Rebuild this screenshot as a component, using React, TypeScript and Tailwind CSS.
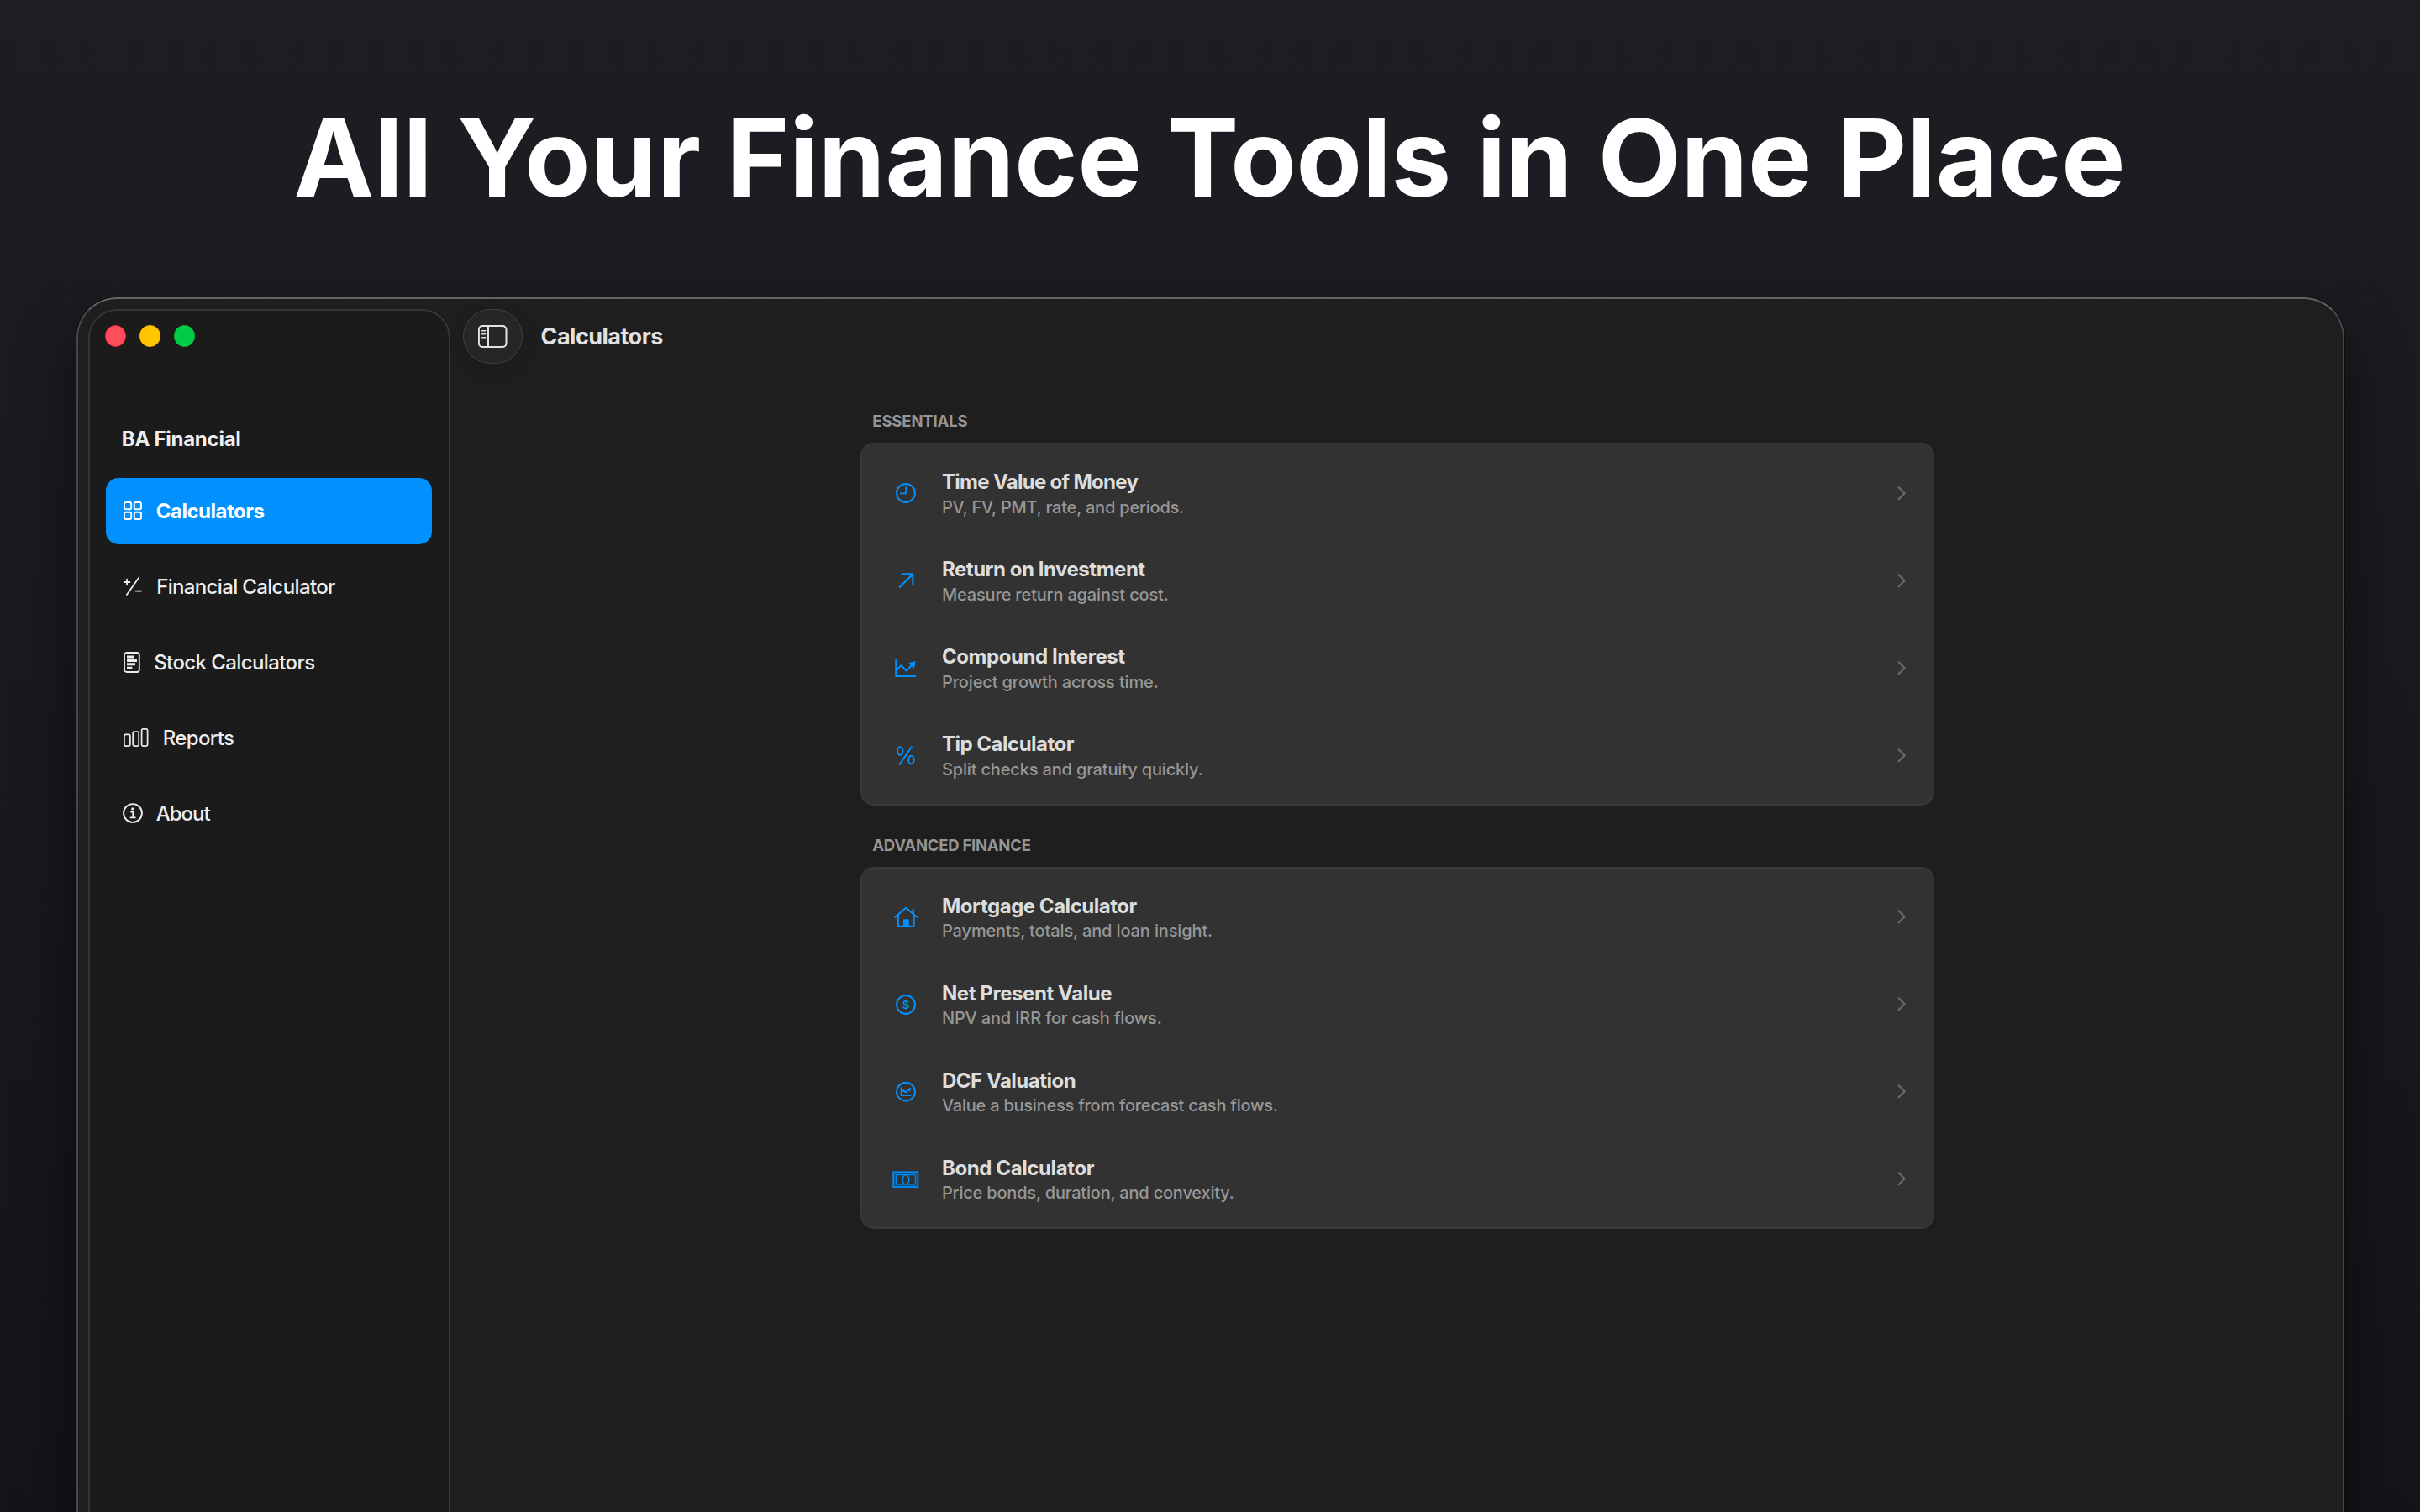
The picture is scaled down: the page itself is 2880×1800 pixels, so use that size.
import React from "react";

type IconProps = { children: React.ReactNode };

/* 44px artboard shared by the list icons */
const ListIcon = ({ children }: IconProps) => (
  <svg
    viewBox="0 0 44 44"
    className="h-11 w-11 shrink-0 text-[#0091ff]"
    fill="none"
    stroke="currentColor"
    strokeWidth="2"
    strokeLinecap="round"
    strokeLinejoin="round"
  >
    {children}
  </svg>
);

const ClockIcon = () => (
  <ListIcon>
    <circle cx="22" cy="22" r="10.9" />
    <path d="M22.2 14.8V22.3H15.8" strokeWidth="1.7" />
  </ListIcon>
);

const ArrowUpRightIcon = () => (
  <ListIcon>
    <path d="M14.6 30L30 14.8M17.6 14.4H30.4V27" strokeWidth="2.1" />
  </ListIcon>
);

const TrendIcon = () => (
  <ListIcon>
    <path d="M10.3 11.9V32H33.4" strokeLinejoin="miter" />
    <path d="M11.3 24.7L16.3 19.2L22.8 25.6L29.2 18.8" />
    <path d="M33 14.9L26.2 16.6L31.5 22Z" fill="currentColor" strokeWidth="1.2" />
  </ListIcon>
);

const PercentIcon = () => (
  <ListIcon>
    <ellipse cx="15.2" cy="17" rx="3.2" ry="4.8" />
    <ellipse cx="28.4" cy="27.6" rx="3.2" ry="4.8" />
    <path d="M14.6 33L28.8 12.2" />
  </ListIcon>
);

const HouseIcon = () => (
  <ListIcon>
    <path d="M9.3 21.8L22.2 10.8L35.2 21.8" />
    <path d="M12.8 19.5V31.6Q12.8 32.7 13.9 32.7H30.6Q31.7 32.7 31.7 31.6V19.5" />
    <rect x="19" y="24.3" width="6.8" height="8.4" fill="currentColor" stroke="none" />
    <path d="M30.8 13.2V17.6" strokeWidth="2.2" />
  </ListIcon>
);

const DollarCircleIcon = () => (
  <ListIcon>
    <circle cx="22" cy="22" r="10.9" />
    <text
      x="22"
      y="26.8"
      textAnchor="middle"
      fill="currentColor"
      stroke="none"
      className="font-['Inter',sans-serif] text-[13.5px] font-medium"
    >
      $
    </text>
  </ListIcon>
);

const TrendCircleIcon = () => (
  <ListIcon>
    <circle cx="22" cy="21.7" r="10.9" />
    <path d="M16.4 17V26.3H27.6" strokeWidth="1.5" />
    <path d="M17 22.4L19.2 19.9L21.9 22.6L24.8 19.6" strokeWidth="1.5" />
    <path d="M27.4 17.6L24 18.5L26.6 21.1Z" fill="currentColor" strokeWidth="0.9" />
  </ListIcon>
);

const BanknoteIcon = () => (
  <ListIcon>
    <rect x="7.2" y="13.3" width="29.2" height="17.8" fill="#0c5388" strokeWidth="1.7" strokeLinejoin="miter" />
    <rect x="10.4" y="16.6" width="22.8" height="11.2" fill="#323232" strokeWidth="1.2" stroke="#0484e8" />
    <ellipse cx="21.9" cy="22.2" rx="3.9" ry="5.5" strokeWidth="1.5" />
  </ListIcon>
);

const GridIcon = () => (
  <svg width="22" height="22" viewBox="0 0 22 22" fill="none" stroke="currentColor" strokeWidth="1.9">
    <rect x="1" y="1" width="8.2" height="8.2" rx="1.8" />
    <rect x="12.8" y="1" width="8.2" height="8.2" rx="1.8" />
    <rect x="1" y="12.8" width="8.2" height="8.2" rx="1.8" />
    <rect x="12.8" y="12.8" width="8.2" height="8.2" rx="1.8" />
  </svg>
);

const PlusMinusIcon = () => (
  <svg width="22" height="22" viewBox="0 0 22 22" fill="none" stroke="currentColor" strokeWidth="1.8" strokeLinecap="round">
    <path d="M3.9 21L18 1" />
    <path d="M0.8 6H7.4M4.1 2.7V9.3" />
    <path d="M14.6 16.6H21.2" />
  </svg>
);

const DocumentIcon = () => (
  <svg width="20" height="25" viewBox="0 0 20 25" fill="none" stroke="currentColor" strokeWidth="1.8">
    <rect x="1" y="1" width="17.8" height="23" rx="2.8" />
    <path d="M4 6H12M4 10.4H16M4 14.8H14M4 19.2H10.4" strokeWidth="3" />
  </svg>
);

const BarsIcon = () => (
  <svg width="30" height="22" viewBox="0 0 30 22" fill="none" stroke="currentColor" strokeWidth="1.7">
    <rect x="0.9" y="7.4" width="7" height="13.7" rx="1.6" />
    <rect x="11.2" y="4" width="7" height="17.1" rx="1.6" />
    <rect x="21.6" y="0.9" width="7" height="20.2" rx="1.6" />
  </svg>
);

const InfoIcon = () => (
  <svg width="24" height="24" viewBox="0 0 24 24" fill="none" stroke="currentColor" strokeWidth="1.9" strokeLinecap="round" className="-ml-px">
    <circle cx="12" cy="12" r="10.9" />
    <circle cx="11.8" cy="6.9" r="1.6" fill="currentColor" stroke="none" />
    <path d="M9.9 10.6H12.2V17.2M9.4 17.3H15" strokeWidth="1.7" />
  </svg>
);

const SidebarToggleIcon = () => (
  <svg width="35" height="28" viewBox="0 0 35 28" fill="none" stroke="currentColor" strokeWidth="2" strokeLinecap="round">
    <rect x="0.9" y="0.9" width="32.6" height="25.2" rx="4.6" />
    <path d="M12 1.2V25.8" />
    <path d="M4.6 6.8H8.6M4.6 10.8H8.6M4.6 14.8H8.6" strokeWidth="1.6" />
  </svg>
);

const Chevron = () => (
  <svg width="10" height="17" viewBox="0 0 10 17" fill="none" stroke="#6a6a6a" strokeWidth="2.2" strokeLinecap="round" strokeLinejoin="round">
    <path d="M1.6 1.2L8.7 8.2L1.6 15.2" />
  </svg>
);

const navItems = [
  { label: "Calculators", icon: <GridIcon />, row: "bg-[#0091ff] text-white font-bold", track: "ml-px tracking-[-0.5px]" },
  { label: "Financial Calculator", icon: <PlusMinusIcon />, row: "text-[#ededed] font-medium", track: "ml-[1.5px] tracking-[-0.66px]" },
  { label: "Stock Calculators", icon: <DocumentIcon />, row: "text-[#ededed] font-medium", track: "ml-[0.5px] tracking-[-0.6px]" },
  { label: "Reports", icon: <BarsIcon />, row: "text-[#ededed] font-medium", track: "ml-px tracking-[-0.65px]" },
  { label: "About", icon: <InfoIcon />, row: "text-[#ededed] font-medium", track: "tracking-[-1px]" },
];

const sections = [
  {
    heading: "ESSENTIALS",
    track: "tracking-[-0.15px]",
    rows: [
      { icon: <ClockIcon />, title: "Time Value of Money", t: "tracking-[-0.7px]", sub: "PV, FV, PMT, rate, and periods.", s: "tracking-[-0.199px]" },
      { icon: <ArrowUpRightIcon />, title: "Return on Investment", t: "tracking-[-0.47px]", sub: "Measure return against cost.", s: "tracking-[-0.175px]" },
      { icon: <TrendIcon />, title: "Compound Interest", t: "tracking-[-0.44px]", sub: "Project growth across time.", s: "tracking-[-0.15px]" },
      { icon: <PercentIcon />, title: "Tip Calculator", t: "tracking-[-0.5px]", sub: "Split checks and gratuity quickly.", s: "tracking-[-0.165px]" },
    ],
  },
  {
    heading: "ADVANCED FINANCE",
    track: "tracking-[-0.25px]",
    rows: [
      { icon: <HouseIcon />, title: "Mortgage Calculator", t: "tracking-[-0.47px]", sub: "Payments, totals, and loan insight.", s: "tracking-[-0.133px]" },
      { icon: <DollarCircleIcon />, title: "Net Present Value", t: "tracking-[-0.43px]", sub: "NPV and IRR for cash flows.", s: "tracking-[-0.181px]" },
      { icon: <TrendCircleIcon />, title: "DCF Valuation", t: "tracking-[-0.49px]", sub: "Value a business from forecast cash flows.", s: "tracking-[-0.235px]" },
      { icon: <BanknoteIcon />, title: "Bond Calculator", t: "tracking-[-0.4px]", sub: "Price bonds, duration, and convexity.", s: "tracking-[-0.195px]" },
    ],
  },
];

function Sidebar() {
  return (
    <aside className="ml-3 mt-3 flex w-[431px] shrink-0 flex-col rounded-t-[34px] border-2 border-b-0 border-[#363636] bg-[#1b1b1b]">
      <div className="flex gap-[15.7px] pl-[17.5px] pt-[17.3px]">
        <span className="size-[25.5px] rounded-full border border-[#ee1f3a] bg-[#ff4d5b]" />
        <span className="size-[25.5px] rounded-full border border-[#f2b400] bg-[#ffc600]" />
        <span className="size-[25.5px] rounded-full border border-[#00b83a] bg-[#00cc47]" />
      </div>
      <h2 className="ml-[37.8px] mt-[95.2px] text-[24px] font-bold leading-[29px] tracking-[-0.268px] text-[#efefef]">
        BA Financial
      </h2>
      <nav className="ml-[19.2px] mt-8 flex w-[387.5px] flex-col gap-[10.9px]">
        {navItems.map((item) => (
          <a
            key={item.label}
            className={`flex h-[79px] items-center gap-4 rounded-[15px] pl-[20.5px] text-[24px] leading-[29px] ${item.row}`}
          >
            {item.icon}
            <span className={item.track}>{item.label}</span>
          </a>
        ))}
      </nav>
    </aside>
  );
}

export default function App() {
  return (
    <div className="flex h-[1800px] w-[2880px] flex-col overflow-hidden bg-linear-to-b from-[#1d1e23] to-[#14151a] font-['Inter',sans-serif]">
      <h1 className="h-[354px] shrink-0 whitespace-nowrap pt-[110px] text-center text-[128px] font-bold leading-[155px] tracking-[-0.09px] text-white">
        <span className="-ml-px">All Your Finance Tools in One Place</span>
      </h1>
      <div className="ml-[91px] flex h-[1600px] w-[2699px] shrink-0 rounded-[48px] border-2 border-[#474747] border-t-[#626363] bg-[#1e1e1e] shadow-[0_0_0_1px_#0c0c0e,0_36px_70px_rgba(0,0,0,0.55)]">
        <Sidebar />
        <main className="flex flex-1 flex-col">
          <header className="flex items-center pl-[14.5px] pt-3">
            <button className="flex h-[65px] w-[71px] items-center justify-center rounded-full border-[1.5px] border-[#404040] bg-[#262626] text-[#e2e2e2] shadow-[0_6px_20px_rgba(0,0,0,0.12)]">
              <SidebarToggleIcon />
            </button>
            <h2 className="ml-[22px] text-[27px] font-bold leading-[33px] tracking-[-0.52px] text-[#e2e2e2]">Calculators</h2>
          </header>
          <div className="mt-[57.2px] flex w-[1278px] translate-x-px flex-col gap-[35.7px] self-center">
            {sections.map((section) => (
              <section key={section.heading}>
                <h3 className={`mb-[15.3px] pl-[14.3px] text-[18.5px] font-bold leading-[22px] text-[#959595] ${section.track}`}>
                  {section.heading}
                </h3>
                <ul className="h-[431.4px] rounded-[16px] border-2 border-[#383838] bg-[#323232] pt-1.5">
                  {section.rows.map((row) => (
                    <li key={row.title} className="flex h-[104px] items-center pl-[29.7px] pr-8">
                      {row.icon}
                      <div className="ml-[21.3px] flex-1">
                        <p className={`text-[24px] font-bold leading-[29px] text-[#dddddd] ${row.t}`}>{row.title}</p>
                        <p className={`mt-[3.5px] text-[20px] font-medium leading-6 text-[#979797] ${row.s}`}>{row.sub}</p>
                      </div>
                      <Chevron />
                    </li>
                  ))}
                </ul>
              </section>
            ))}
          </div>
        </main>
      </div>
    </div>
  );
}
